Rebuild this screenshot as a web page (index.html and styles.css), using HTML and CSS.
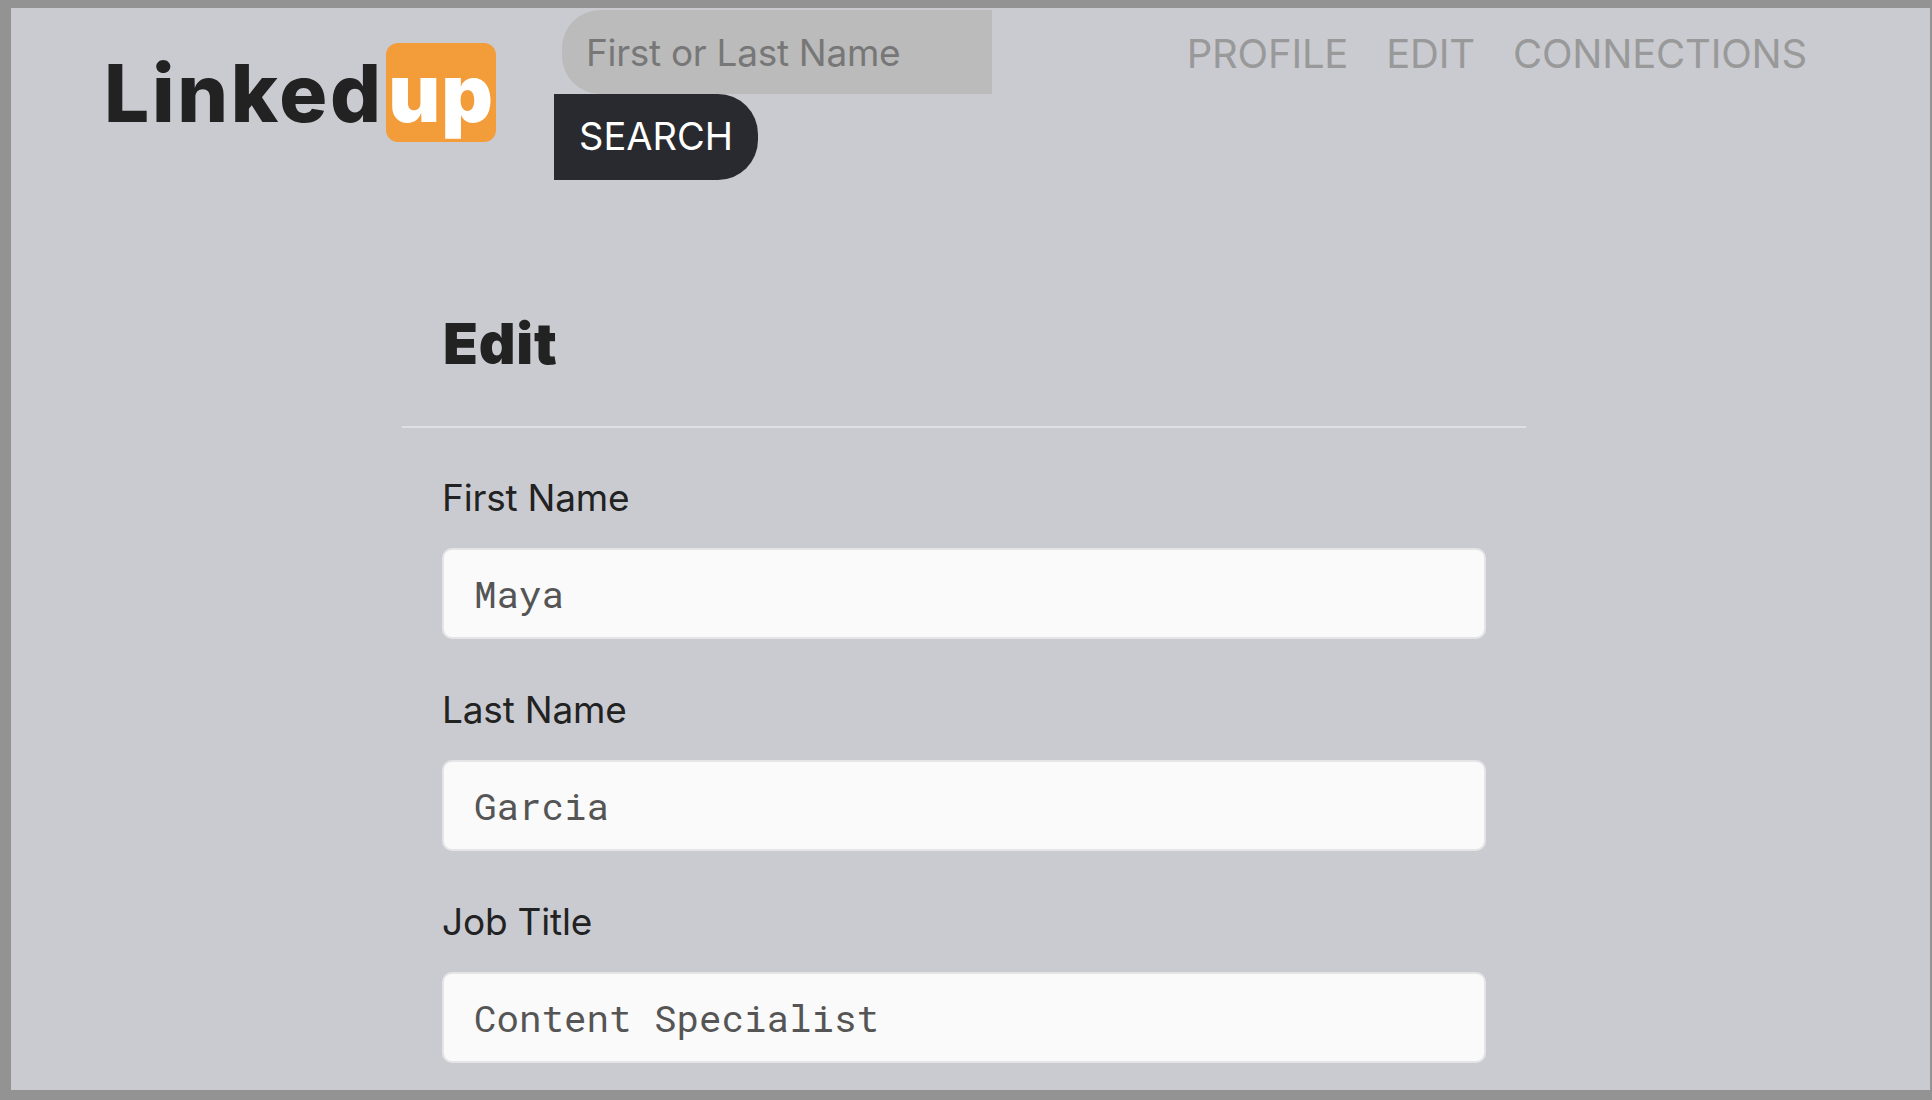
FILE: index.html
```html
<!DOCTYPE html>
<html lang="en">
<head>
    <meta charset="UTF-8">
    <meta name="viewport" content="width=device-width, initial-scale=1.0">
    <title>Linkedup - Edit</title>
    <link rel="stylesheet" href="styles.css">
</head>
<body>
    <div class="page">
        <header class="top-bar">
            <a class="logo" href="#">Linked<span class="logo-up">up</span></a>
            <form class="search-form">
                <input class="search-input" type="text" name="q" placeholder="First or Last Name">
                <button class="search-btn" type="submit">SEARCH</button>
            </form>
            <nav class="nav-links">
                <a href="#">PROFILE</a>
                <a href="#">EDIT</a>
                <a href="#">CONNECTIONS</a>
            </nav>
        </header>
        <main class="edit-section">
            <h2>Edit</h2>
            <form class="edit-form">
                <label for="first_name">First Name</label>
                <input type="text" name="first_name" id="first_name" value="Maya">
                <label for="last_name">Last Name</label>
                <input type="text" name="last_name" id="last_name" value="Garcia">
                <label for="job_title">Job Title</label>
                <input type="text" name="job_title" id="job_title" value="Content Specialist">
            </form>
        </main>
    </div>
</body>
</html>
```

FILE: styles.css
```css
html, body {
    margin: 0;
    height: 100%;
    overflow: hidden;
}
body {
    font-family: 'Inter', Arial, sans-serif;
    color: #222;
}
.page {
    box-sizing: border-box;
    height: 1100px;
    overflow: hidden;
    background: #cacbd1;
    border-style: solid;
    border-color: #939393;
    border-width: 8px 2px 10px 11px;
}
/* top bar */
.top-bar {
    display: flex;
    align-items: flex-start;
    padding-left: 93px;
    padding-right: 123px;
}
.logo {
    display: flex;
    align-items: flex-start;
    flex-shrink: 0;
    margin-top: 35px;
    width: 392px;
    font-size: 80px;
    line-height: 99px;
    font-weight: 800;
    letter-spacing: 2.7px;
    color: #222;
    text-decoration: none;
}
.logo-up {
    margin-left: auto;
    width: 110px;
    height: 99px;
    background: #f39c3a;
    border-radius: 12px;
    color: #fff;
    font-weight: 900;
    text-align: center;
    letter-spacing: 1px;
}
.search-form {
    display: flex;
    flex-direction: column;
    align-items: flex-start;
    margin-left: 58px;
    margin-top: 2px;
}
.search-input {
    box-sizing: border-box;
    width: 430px;
    height: 84px;
    margin-left: 8px;
    padding: 0 24px;
    border: none;
    border-radius: 38px 0 0 38px;
    background: #bbb;
    font-family: 'Inter', Arial, sans-serif;
    font-size: 37px;
    letter-spacing: -0.3px;
    color: #777;
}
.search-input::placeholder {
    color: #777;
    opacity: 1;
}
.search-btn {
    width: 204px;
    height: 86px;
    padding: 0 0 2px;
    border: none;
    border-radius: 0 40px 40px 0;
    background: #292a2f;
    color: #fff;
    font-family: 'Inter', Arial, sans-serif;
    font-size: 38px;
}
.nav-links {
    display: flex;
    gap: 38px;
    margin-left: auto;
    margin-top: 22px;
}
.nav-links a {
    font-size: 40px;
    line-height: 48px;
    letter-spacing: -0.2px;
    color: #999;
    text-decoration: none;
}
/* edit form */
.edit-section {
    width: 1124px;
    margin-left: 391px;
    margin-top: 129px;
}
.edit-section h2 {
    margin: 0;
    padding: 0 0 47px 41px;
    font-size: 57px;
    line-height: 70px;
    font-weight: 900;
    letter-spacing: 0.8px;
    border-bottom: 2px solid #dfe0e5;
}
.edit-form {
    display: flex;
    flex-direction: column;
    padding: 0 40px;
}
.edit-form label {
    margin-top: 42px;
    margin-bottom: 21px;
    font-size: 37px;
    line-height: 58px;
    letter-spacing: -0.2px;
}
.edit-form label:first-child {
    margin-top: 41px;
}
.edit-form input {
    box-sizing: border-box;
    height: 91px;
    padding: 0 30px;
    border: 2px solid #e5e5e8;
    border-radius: 10px;
    background: #fafafa;
    font-family: 'Roboto Mono', 'DejaVu Sans Mono', monospace;
    font-size: 37.5px;
    color: #555;
}
```
